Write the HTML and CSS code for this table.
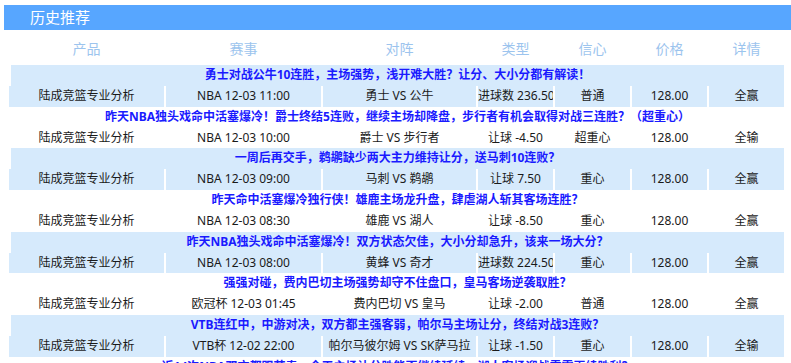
FILE: index.html
```html
<!DOCTYPE html>
<html lang="zh-CN">
<head>
<meta charset="utf-8">
<title>历史推荐</title>
<link rel="stylesheet" href="styles.css">
</head>
<body>
<div class="page">
  <div class="bar">历史推荐</div>
  <div class="table">
    <div class="thead">
      <div>产品</div><div>赛事</div><div>对阵</div><div>类型</div><div>信心</div><div>价格</div><div>详情</div>
    </div>

    <div class="group alt">
      <div class="title">勇士对战公牛10连胜，主场强势，浅开难大胜？让分、大小分都有解读！</div>
      <div class="row">
        <div>陆成竞篮专业分析</div><div>NBA 12-03 11:00</div><div>勇士 VS 公牛</div><div>进球数 236.50</div><div>普通</div><div>128.00</div><div>全赢</div>
      </div>
    </div>

    <div class="group">
      <div class="title">昨天NBA独头戏命中活塞爆冷！爵士终结5连败，继续主场却降盘，步行者有机会取得对战三连胜？（超重心）</div>
      <div class="row">
        <div>陆成竞篮专业分析</div><div>NBA 12-03 10:00</div><div>爵士 VS 步行者</div><div>让球 -4.50</div><div>超重心</div><div>128.00</div><div>全输</div>
      </div>
    </div>

    <div class="group alt">
      <div class="title">一周后再交手，鹈鹕缺少两大主力维持让分，送马刺10连败？</div>
      <div class="row">
        <div>陆成竞篮专业分析</div><div>NBA 12-03 09:00</div><div>马刺 VS 鹈鹕</div><div>让球 7.50</div><div>重心</div><div>128.00</div><div>全赢</div>
      </div>
    </div>

    <div class="group">
      <div class="title">昨天命中活塞爆冷独行侠！雄鹿主场龙升盘，肆虐湖人斩其客场连胜？</div>
      <div class="row">
        <div>陆成竞篮专业分析</div><div>NBA 12-03 08:30</div><div>雄鹿 VS 湖人</div><div>让球 -8.50</div><div>重心</div><div>128.00</div><div>全赢</div>
      </div>
    </div>

    <div class="group alt">
      <div class="title">昨天NBA独头戏命中活塞爆冷！双方状态欠佳，大小分却急升，该来一场大分？</div>
      <div class="row">
        <div>陆成竞篮专业分析</div><div>NBA 12-03 08:00</div><div>黄蜂 VS 奇才</div><div>进球数 224.50</div><div>重心</div><div>128.00</div><div>全赢</div>
      </div>
    </div>

    <div class="group">
      <div class="title">强强对碰，费内巴切主场强势却守不住盘口，皇马客场逆袭取胜？</div>
      <div class="row">
        <div>陆成竞篮专业分析</div><div>欧冠杯 12-03 01:45</div><div>费内巴切 VS 皇马</div><div>让球 -2.00</div><div>普通</div><div>128.00</div><div>全赢</div>
      </div>
    </div>

    <div class="group alt">
      <div class="title">VTB连红中，中游对决，双方都主强客弱，帕尔马主场让分，终结对战3连败？</div>
      <div class="row">
        <div>陆成竞篮专业分析</div><div>VTB杯 12-02 22:00</div><div>帕尔马彼尔姆 VS SK萨马拉</div><div>让球 -1.50</div><div>重心</div><div>128.00</div><div>全输</div>
      </div>
    </div>

    <div class="group">
      <div class="title">近14次NBA双方都跟节奏，今天主场让分胜能否继续延续，湖人客场迎战雷霆再续胜利？</div>
      <div class="row">
        <div>陆成竞篮专业分析</div><div>NBA 12-02 11:00</div><div>雷霆 VS 湖人</div><div>让球 -3.50</div><div>重心</div><div>128.00</div><div>全赢</div>
      </div>
    </div>
  </div>
</div>
</body>
</html>
```

FILE: styles.css
```css
html, body {
  margin: 0;
  padding: 0;
  background: #ffffff;
}

body {
  font-family: "Noto Sans", "Noto Sans CJK SC", sans-serif;
  font-size: 12px;
  color: #1a1a1a;
}

.page {
  padding-top: 5px;
}

.bar {
  margin-left: 4px;
  height: 25px;
  background: #57a6ff;
  color: #ffffff;
  font-size: 15px;
  line-height: 25px;
  padding-left: 26px;
}

.table {
  margin-left: 9px;
  width: 775px;
}

.thead,
.row {
  display: grid;
  grid-template-columns: 155px 155px 153px 75px 75px 75px 75px;
  column-gap: 2px;
}

.thead {
  height: 35px;
  align-items: center;
  color: #9cc4ee;
  font-size: 14px;
  text-align: center;
}

.group .title {
  height: 20.85px;
  line-height: 20.85px;
  margin-left: 2px;
  text-align: center;
  font-weight: bold;
  color: #1a1aff;
  white-space: nowrap;
  overflow: hidden;
}

.row > div {
  height: 20.85px;
  line-height: 20.85px;
  text-align: center;
  white-space: nowrap;
  overflow: hidden;
}

.group.alt .title,
.group.alt .row > div {
  background: #d6eafc;
}
```
